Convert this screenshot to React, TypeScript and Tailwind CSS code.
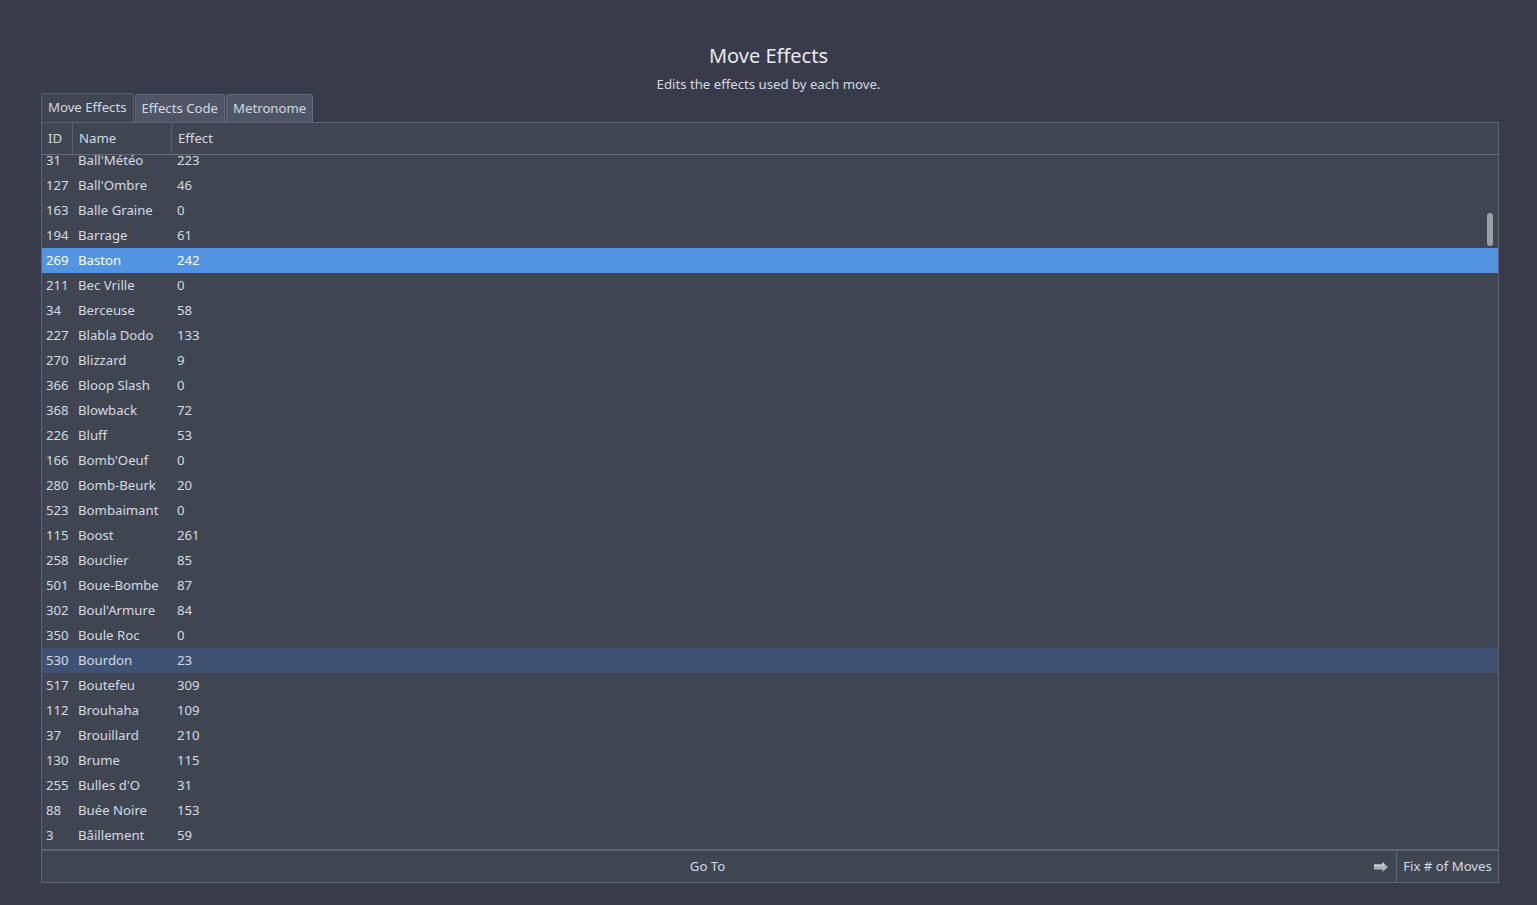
import React from 'react'

// Move list as shown in the editor
const rows: [number, string, number][] = [
  [31, "Ball'Météo", 223],
  [127, "Ball'Ombre", 46],
  [163, 'Balle Graine', 0],
  [194, 'Barrage', 61],
  [269, 'Baston', 242],
  [211, 'Bec Vrille', 0],
  [34, 'Berceuse', 58],
  [227, 'Blabla Dodo', 133],
  [270, 'Blizzard', 9],
  [366, 'Bloop Slash', 0],
  [368, 'Blowback', 72],
  [226, 'Bluff', 53],
  [166, "Bomb'Oeuf", 0],
  [280, 'Bomb-Beurk', 20],
  [523, 'Bombaimant', 0],
  [115, 'Boost', 261],
  [258, 'Bouclier', 85],
  [501, 'Boue-Bombe', 87],
  [302, "Boul'Armure", 84],
  [350, 'Boule Roc', 0],
  [530, 'Bourdon', 23],
  [517, 'Boutefeu', 309],
  [112, 'Brouhaha', 109],
  [37, 'Brouillard', 210],
  [130, 'Brume', 115],
  [255, "Bulles d'O", 31],
  [88, 'Buée Noire', 153],
  [3, 'Bâillement', 59],
]

const SELECTED = 269
const HOVERED = 530

function ArrowIcon() {
  return (
    <svg width="16" height="12" viewBox="0 0 16 12" fill="none">
      <path d="M1 3.5H9.5V1L15 6L9.5 11V8.5H1Z" fill="#aeb2ba" />
      <path d="M1 3.5H9.5V1L11 2.4V5H1Z" fill="#cfd2d8" />
    </svg>
  )
}

export default function App() {
  return (
    <div
      className="w-[1537px] h-[905px] bg-[#383c4a] text-[#d3dae3] text-[13.2px] overflow-hidden flex flex-col"
      style={{ fontFamily: '"Noto Sans", "Open Sans", sans-serif' }}
    >
      {/* Header */}
      <div className="flex flex-col items-center pt-[42px]">
        <h1 className="text-[20px] leading-[28px] text-[#e6e9ee]">Move Effects</h1>
        <p className="mt-[5px] leading-[18px]">Edits the effects used by each move.</p>
      </div>

      {/* Tabs */}
      <div className="ml-[41px] flex h-[29px] items-end">
        <div className="h-[29px] px-[6px] flex items-center bg-[#404552] border border-b-0 border-[#5b606d] rounded-t-[3px]">
          Move Effects
        </div>
        <div className="h-[28px] ml-[1px] px-[6px] flex items-center bg-[#505565] border border-b-0 border-[#646a78] rounded-t-[3px]">
          Effects Code
        </div>
        <div className="h-[28px] ml-[1px] px-[6px] flex items-center bg-[#505565] border border-b-0 border-[#646a78] rounded-t-[3px]">
          Metronome
        </div>
      </div>

      {/* Table frame */}
      <div className="ml-[41px] w-[1458px] h-[761px] border border-[#5f6470] bg-[#404552] flex flex-col">
        <div className="h-[32px] flex border-b border-[#666b77] shrink-0">
          <div className="w-[31px] pl-[6px] flex items-center border-r border-[#5b606d]">ID</div>
          <div className="w-[99px] pl-[6px] flex items-center border-r border-[#5b606d]">Name</div>
          <div className="flex-1 pl-[6px] flex items-center">Effect</div>
        </div>

        <div className="relative h-[694px] overflow-hidden">
          <div className="mt-[-7px]">
            {rows.map(([id, name, effect]) => (
              <div
                key={id}
                className={
                  'h-[25px] flex items-center ' +
                  (id === SELECTED ? 'bg-[#5294e2] text-white' : id === HOVERED ? 'bg-[#3e5373]' : '')
                }
              >
                <div className="w-[32px] pl-[4px]">{id}</div>
                <div className="w-[99px] pl-[4px]">{name}</div>
                <div className="flex-1 pl-[4px]">{effect}</div>
              </div>
            ))}
          </div>
          {/* Scrollbar handle */}
          <div className="absolute right-[5px] top-[58px] w-[6px] h-[33px] rounded-full bg-[#9a9ea7]" />
        </div>

        {/* Bottom bar */}
        <div className="h-[33px] flex border-t-2 border-[#5f6470] shrink-0">
          <div className="flex-1 flex items-center border-r border-[#5f6470]">
            <span className="flex-1 text-center">Go To</span>
            <div className="w-[16px] h-[12px] mr-[7px] flex">
              <ArrowIcon />
            </div>
          </div>
          <div className="w-[101px] flex items-center justify-center">Fix # of Moves</div>
        </div>
      </div>
    </div>
  )
}
